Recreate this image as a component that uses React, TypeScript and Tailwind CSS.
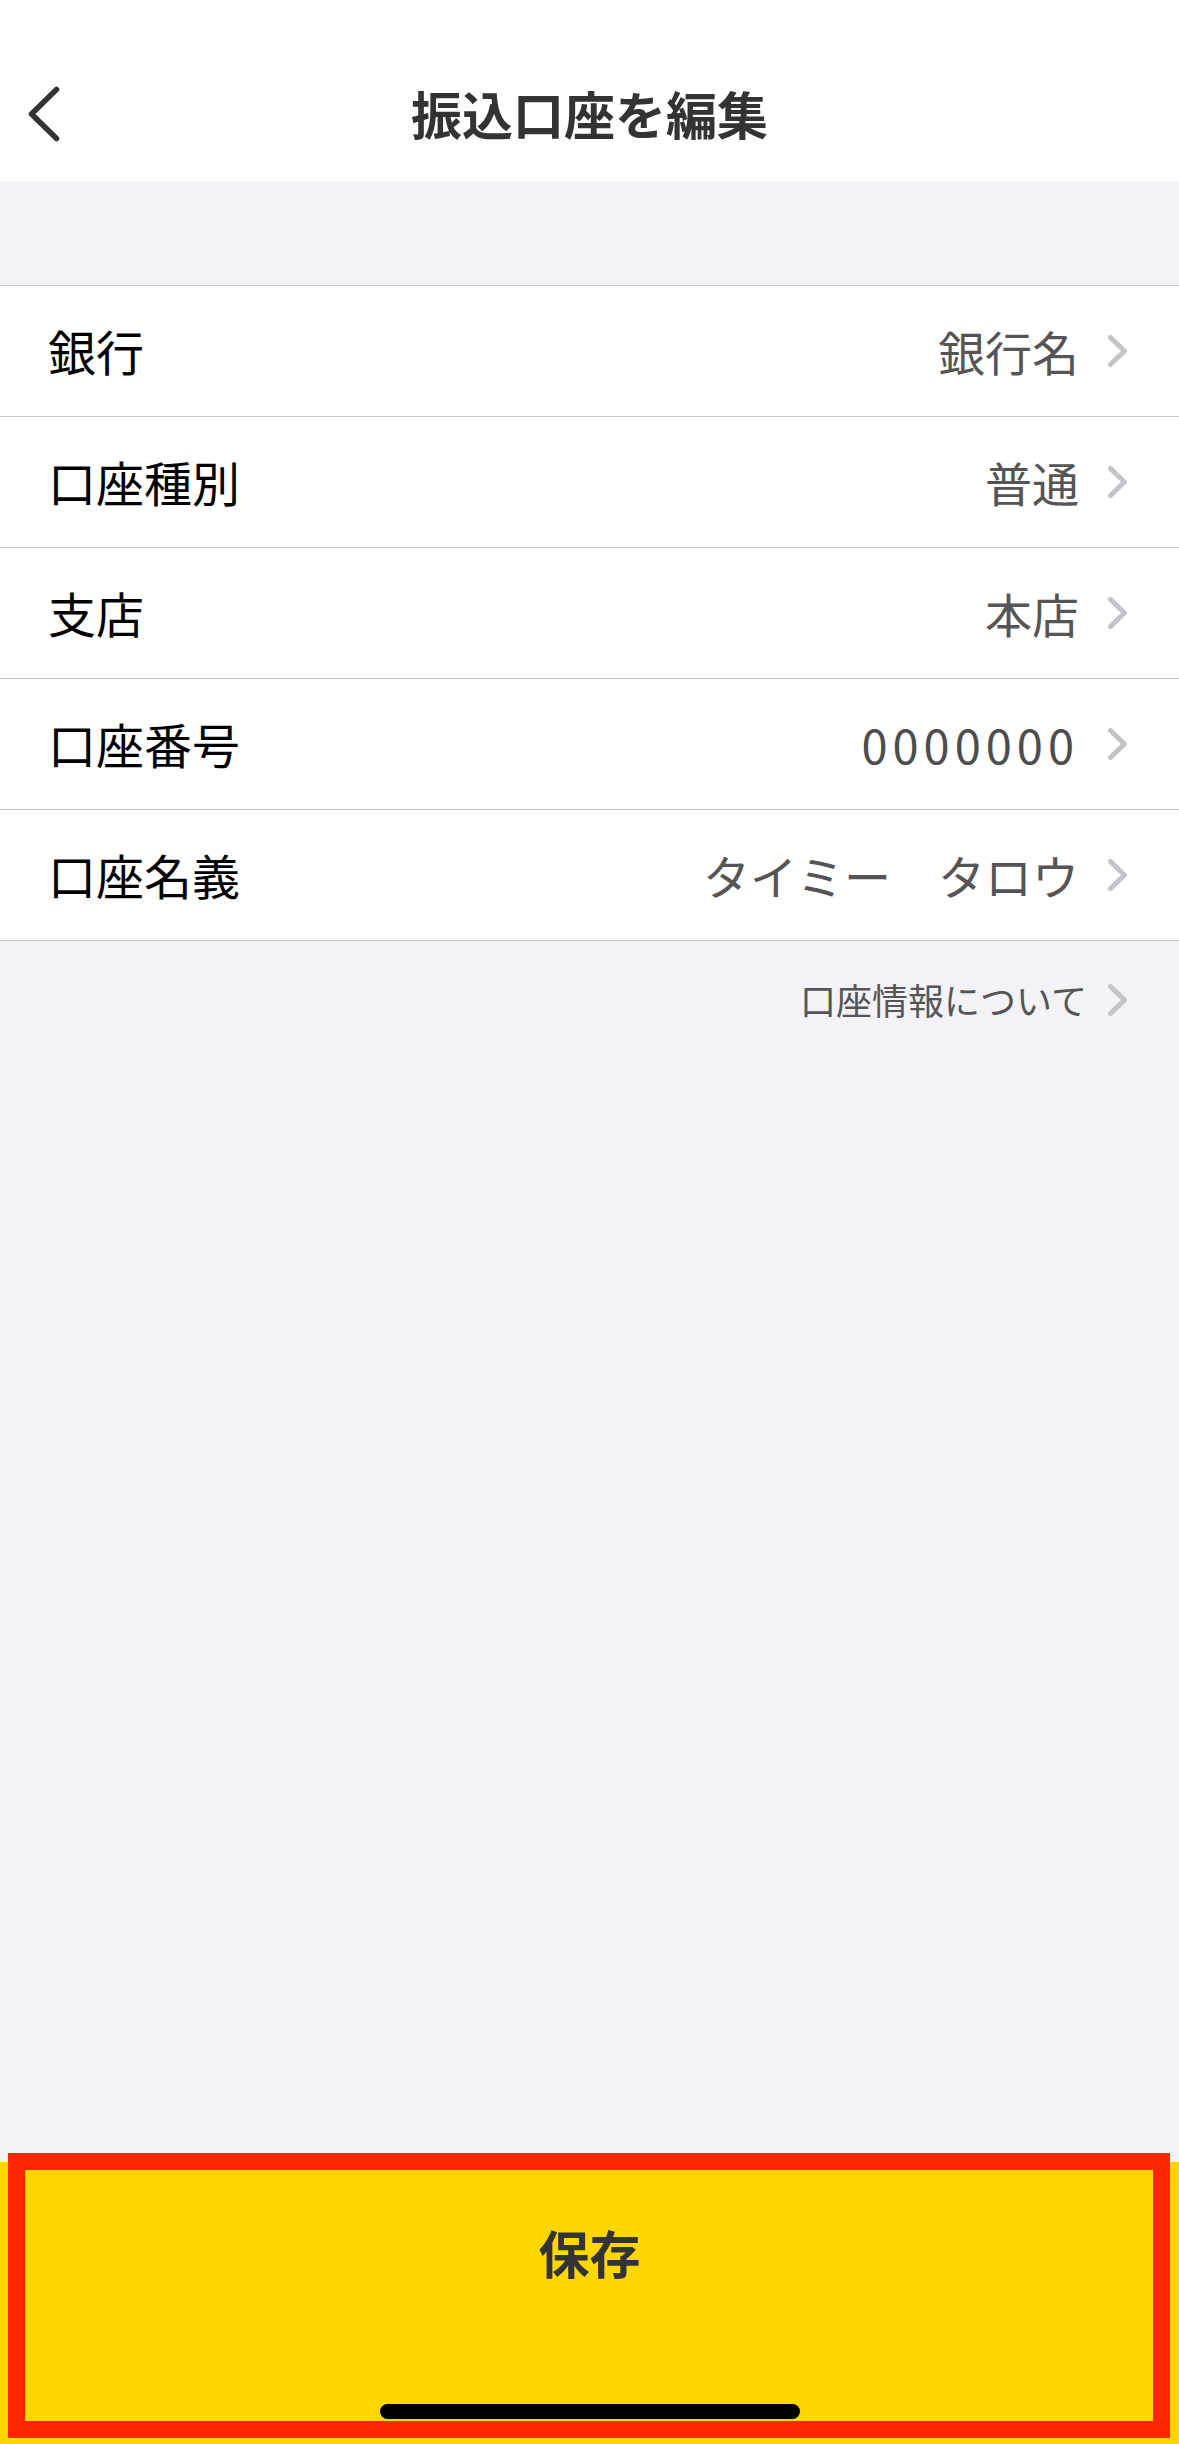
import React from "react";

const font = { fontFamily: '"Noto Sans CJK JP", "Noto Sans", sans-serif' };

function Chevron() {
  return (
    <svg width="21" height="34" viewBox="0 0 21 34" className="shrink-0">
      <polyline
        points="3.5,3.5 17.5,17 3.5,30.5"
        fill="none"
        stroke="#c4c4c8"
        strokeWidth="5"
        strokeLinecap="round"
        strokeLinejoin="round"
      />
    </svg>
  );
}

function Row({ label, value, mono }: { label: string; value: string; mono?: boolean }) {
  return (
    <div className="flex h-[131px] items-center border-b border-[#c8c7cc] bg-white pl-[48px] pr-[51px]">
      <span className="flex-1 text-[48px] leading-[1.2] text-black">{label}</span>
      <span
        className={
          mono
            ? "text-[47px] leading-[1.2] tracking-[5px] text-[#4d4d4d]"
            : "text-[47px] leading-[1.2] text-[#555555]"
        }
      >
        {value}
      </span>
      <div className="ml-[28px]">
        <Chevron />
      </div>
    </div>
  );
}

export default function App() {
  return (
    <div style={font} className="flex min-h-[2444px] w-full flex-col bg-[#f2f2f7]">
      {/* Header */}
      <header className="grid h-[181px] grid-cols-[1fr_auto_1fr] items-center bg-white pt-[46px]">
        <div className="pl-[28px]">
          <svg width="32" height="56" viewBox="0 0 32 56">
            <polyline
              points="28.5,3.5 3.5,28 28.5,52.5"
              fill="none"
              stroke="#333333"
              strokeWidth="5.5"
              strokeLinecap="round"
              strokeLinejoin="round"
            />
          </svg>
        </div>
        <h1 className="text-[51px] font-bold leading-[1.2] text-[#333333]">振込口座を編集</h1>
        <div />
      </header>

      <div className="h-[104px]" />

      {/* List */}
      <div className="border-t border-[#c8c7cc]">
        <Row label="銀行" value="銀行名" />
        <Row label="口座種別" value="普通" />
        <Row label="支店" value="本店" />
        <Row label="口座番号" value="0000000" mono />
        <Row label="口座名義" value="タイミー　タロウ" />
      </div>

      <div className="flex h-[118px] items-center justify-end pr-[51px]">
        <span className="text-[36px] leading-[1.2] text-[#555555]">口座情報について</span>
        <div className="ml-[20px]">
          <Chevron />
        </div>
      </div>

      {/* Save button */}
      <div className="relative mt-auto flex h-[282px] flex-col items-center bg-[#ffd700]">
        <span className="pt-[60px] text-[51px] font-bold leading-[1.2] text-[#333333]">保存</span>
        <div className="mt-[121px] h-[15px] w-[420px] rounded-full bg-black" />
        <div className="pointer-events-none absolute -top-[9px] left-[8px] right-[9px] bottom-[6px] border-[17px] border-[#ff2600]" />
      </div>
    </div>
  );
}
